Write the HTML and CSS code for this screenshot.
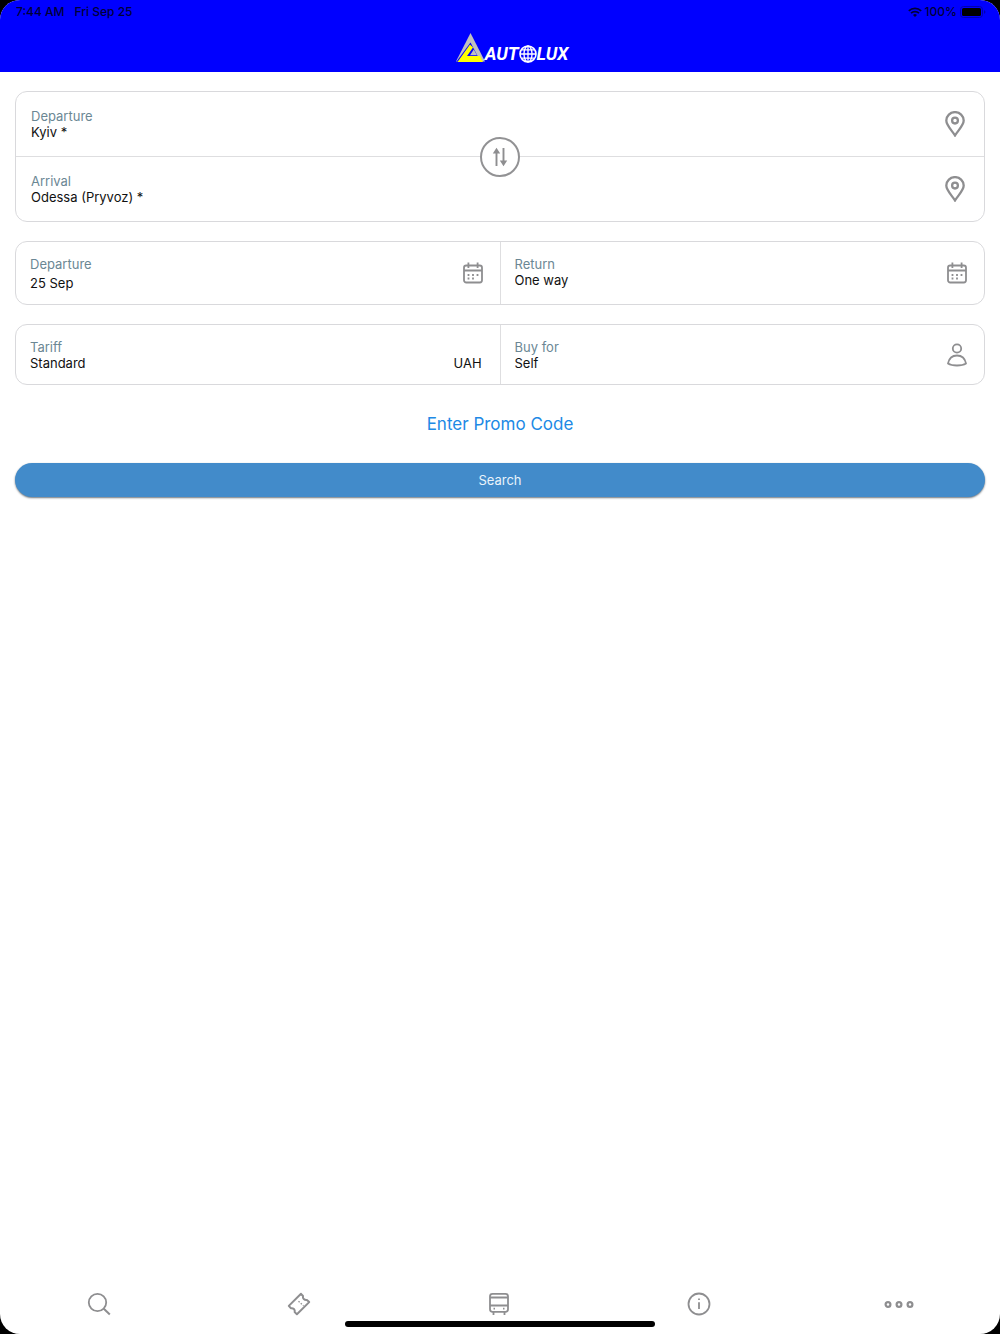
FILE: index.html
```html
<!DOCTYPE html>
<html lang="en">
<head>
<meta charset="utf-8">
<meta name="viewport" content="width=device-width, initial-scale=1">
<title>Autolux</title>
<link rel="stylesheet" href="styles.css">
</head>
<body>
<svg class="sprite" aria-hidden="true">
  <symbol id="pin" viewBox="0 0 20 26"><path d="M10 24.500C7 19.500 1.300 14.500 1.300 9.600a8.700 8.500 0 0 1 17.400 0C18.700 14.500 13 19.500 10 24.500z" stroke-width="2.300"/><circle cx="10" cy="9.600" r="2.900" stroke-width="2.300"/></symbol>
  <symbol id="calendar" viewBox="0 0 20 22"><rect x="1" y="3.500" width="18" height="17" rx="2.200"/><path d="M1 8.500h18M5.400.5v5.500M14.600.5v5.500"/><path d="M4.600 13h1.800M9.100 13h1.800M13.600 13h1.800M4.600 16.500h1.800M9.100 16.500h1.800"/></symbol>
  <symbol id="person" viewBox="0 0 20 24"><circle cx="10" cy="5.500" r="4.200"/><path d="M1 20.500c1-5 4.600-8 9-8s8 3 9 8c-2.500 1.600-5.500 2-9 2s-6.500-.4-9-2z" stroke-linejoin="round"/></symbol>
</svg>
<div class="screen">
  <header class="header">
    <div class="status">
      <div class="status-group"><span>7:44 AM</span><span>Fri Sep 25</span></div>
      <div class="status-group status-right">
        <svg width="14" height="10" viewBox="0 0 14 10" fill="none" stroke="currentColor" stroke-width="1.700"><path d="M.8 3.800a9 9 0 0 1 12.400 0M3 6.200a5.800 5.800 0 0 1 8 0"/><path d="M5 7.900a3 3 0 0 1 4 0L7 9.900z" fill="currentColor" stroke="none"/></svg>
        <span>100%</span>
        <svg width="26" height="12" viewBox="0 0 26 12"><rect x=".5" y=".5" width="22" height="11" rx="3" fill="none" stroke="#0000b0"/><rect x="2" y="2" width="19" height="8" rx="1.500"/><path d="M24 4v4c2-1 2-3 0-4z" fill="#0000b0"/></svg>
      </div>
    </div>
    <div class="logo">
      <svg width="29" height="30" viewBox="0 0 29 30"><path d="M14.500 0L29 28.500H0z" fill="#c0c0c0"/><path d="M14.500 9.500L24.500 28.500H.5z" fill="#00f"/><path d="M14 11.500l3 3L11 23h13l3 6H1.500z" fill="#ff0"/><path d="M17.800 16.500l3.200 5.700h-7z" fill="#c0c0c0"/></svg>
      <span class="wordmark">AUT</span>
      <svg width="18" height="18" viewBox="0 0 18 18" fill="none" stroke="#fff" stroke-width="1.300"><circle cx="9" cy="9" r="8" stroke-width="1.600"/><ellipse cx="9" cy="9" rx="4" ry="8"/><path d="M1 9h16M9 1v16M3 4.800h12M3 13.200h12"/></svg>
      <span class="wordmark">LUX</span>
    </div>
  </header>

  <main class="main">
    <form class="form">
      <div class="card route">
        <div class="field">
          <div class="field-text"><label for="from">Departure</label><input id="from" type="text" value="Kyiv *"></div>
          <svg class="icon pin"><use href="#pin"/></svg>
        </div>
        <div class="field">
          <div class="field-text"><label for="to">Arrival</label><input id="to" type="text" value="Odessa (Pryvoz) *"></div>
          <svg class="icon pin"><use href="#pin"/></svg>
        </div>
        <button class="swap" type="button" aria-label="Swap departure and arrival">
          <svg class="icon" width="16" height="20" viewBox="0 0 16 20"><path d="M4.500 19V4M11.500 1v15" stroke-width="1.900"/><path class="solid" d="M4.500 .8L8.200 6.500H.8zM11.500 19.200L15.200 13.500H7.800z"/></svg>
        </button>
      </div>

      <div class="card split dates">
        <div class="field">
          <div class="field-text spaced"><label for="out">Departure</label><input id="out" type="text" value="25 Sep"></div>
          <svg class="icon calendar"><use href="#calendar"/></svg>
        </div>
        <div class="field">
          <div class="field-text"><label for="back">Return</label><input id="back" type="text" value="One way"></div>
          <svg class="icon calendar"><use href="#calendar"/></svg>
        </div>
      </div>

      <div class="card split options">
        <div class="field">
          <div class="field-text"><label for="tariff">Tariff</label><select id="tariff"><option>Standard</option></select></div>
          <select class="currency" aria-label="Currency"><option>UAH</option></select>
        </div>
        <div class="field">
          <div class="field-text"><label for="buyer">Buy for</label><select id="buyer"><option>Self</option></select></div>
          <svg class="icon person"><use href="#person"/></svg>
        </div>
      </div>

      <a class="promo" href="#promo">Enter Promo Code</a>
      <button class="search" type="submit">Search</button>
    </form>
  </main>

  <nav class="tabs">
    <a href="#search" aria-label="Search"><svg class="icon" width="24" height="24" viewBox="0 0 24 24"><circle cx="10.500" cy="10.500" r="8.700"/><path d="M16.800 16.800l6 5.700" stroke-width="2"/></svg></a>
    <a href="#tickets" aria-label="Tickets"><svg class="icon" width="24" height="24" viewBox="0 0 24 24"><path d="M14 1.800l2 2.200c-.6 2.600 1.300 4.300 3.900 4l2.300 2.100L9.900 22.300l-2.200-2.200c.5-2.700-1.300-4.300-3.900-3.900L1.800 13.900z" stroke-width="2" stroke-linejoin="round"/><path d="M11.500 9.300l5 4.500" stroke-width="1.300" stroke-dasharray="1.500 1.500"/></svg></a>
    <a href="#buses" aria-label="Buses"><svg class="icon" width="24" height="24" viewBox="0 0 24 24"><rect x="3" y="1.800" width="18" height="18" rx="2.500"/><path d="M3 5.500h18M3 13.500h18M6.500 20v3M17.500 20v3M6.500 16.700H8M16 16.700h1.500"/></svg></a>
    <a href="#info" aria-label="Information"><svg class="icon" width="24" height="24" viewBox="0 0 24 24"><circle cx="12" cy="12" r="10.500"/><path d="M12 10.300V17M12 6.500v1.600"/></svg></a>
    <a href="#more" aria-label="More"><svg class="icon" width="32" height="24" viewBox="0 0 32 24"><circle cx="5" cy="12.500" r="2.400" stroke-width="2.200"/><circle cx="16" cy="12.500" r="2.400" stroke-width="2.200"/><circle cx="27" cy="12.500" r="2.400" stroke-width="2.200"/></svg></a>
  </nav>
  <div class="home-bar"></div>
</div>
</body>
</html>
```
FILE: styles.css
```css
* { box-sizing: border-box; }

body {
  margin: 0;
  background: #000;
  color: #111;
  font: 13px/16px Inter, "Liberation Sans", sans-serif;
}

.sprite { display: none; }

.screen {
  display: flex;
  flex-direction: column;
  min-height: 100vh;
  background: #fff;
  border-radius: 20px;
  overflow: hidden;
}

.header {
  background: #00f;
  height: 72px;
}

.status {
  display: flex;
  justify-content: space-between;
  height: 24px;
  padding: 0 14px 0 16px;
  align-items: center;
  font-size: 12px;
  font-weight: 500;
  color: #000038;
}

.status-group { display: flex; align-items: center; gap: 10px; }
.status-right { gap: 3px; }

.logo {
  display: flex;
  justify-content: center;
  align-items: flex-end;
  height: 39px;
  padding-left: 24px;
}

.wordmark {
  color: #fff;
  font: italic bold 18px/18px Roboto, "Liberation Sans", sans-serif;
}

.main {
  flex: 1;
  padding: 19px 15px;
}

.form {
  display: flex;
  flex-direction: column;
  gap: 19px;
}

.card {
  border: 1px solid #d9d9dc;
  border-radius: 12px;
}

.route { position: relative; }

.field {
  display: flex;
  flex: 1;
  align-items: center;
  justify-content: space-between;
}

.route .field { height: 64px; padding: 0 19px 0 15px; }
.route .field + .field { height: 65px; border-top: 1px solid #dedee0; }

.split { display: flex; }
.split .field { padding: 0 17px 0 14px; }
.split .field + .field { border-left: 1px solid #dedee0; }
.dates .field { height: 62px; }
.dates .field-text { align-self: flex-start; padding-top: 14px; }
.options .field { height: 59px; }

.field-text {
  display: flex;
  flex: 1;
  flex-direction: column;
  min-width: 0;
}

.spaced { gap: 3px; }

label { color: #6b8794; }

input,
select {
  appearance: none;
  width: 100%;
  height: 16px;
  margin: 0;
  padding: 0;
  border: 0;
  outline: 0;
  background: none;
  color: #111;
  font: inherit;
}

.currency {
  width: auto;
  align-self: flex-end;
  margin-bottom: 13px;
}

.icon {
  display: block;
  flex: none;
  fill: none;
  stroke: #8e8e90;
  stroke-width: 1.8;
}

.solid { fill: #8e8e90; stroke: none; }

.pin { width: 20px; height: 26px; }
.calendar { width: 20px; height: 22px; }
.person { width: 20px; height: 24px; }

.swap {
  position: absolute;
  top: 50%;
  left: 50%;
  display: flex;
  align-items: center;
  justify-content: center;
  width: 40px;
  height: 40px;
  margin: -20px 0 0 -20px;
  padding: 0;
  border: 2px solid #929294;
  border-radius: 50%;
  background: #fff;
}

.promo {
  align-self: center;
  margin: 10px 0;
  color: #2089e5;
  font-size: 17px;
  line-height: 20px;
  text-decoration: none;
}

.search {
  height: 34px;
  border: 0;
  border-radius: 17px;
  background: #428bca;
  box-shadow: 0 1px 2px #6d757c;
  color: #e9f3fb;
  font: inherit;
}

.tabs {
  display: grid;
  grid-template-columns: repeat(5, 1fr);
  padding-bottom: 5px;
}

.tabs a { display: flex; justify-content: center; padding-right: 2px; }

.home-bar {
  align-self: center;
  width: 31%;
  height: 6px;
  margin-bottom: 7px;
  border-radius: 3px;
  background: #000;
}
```
